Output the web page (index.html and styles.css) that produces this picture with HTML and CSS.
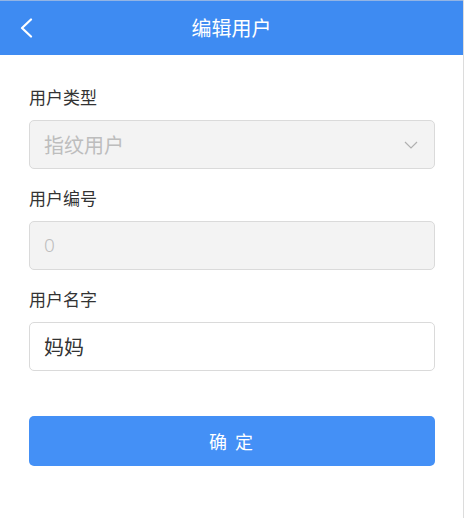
FILE: index.html
```html
<!DOCTYPE html>
<html lang="zh-CN">
<head>
<meta charset="utf-8">
<title>编辑用户</title>
<link rel="stylesheet" href="styles.css">
</head>
<body>
<div class="page">
  <header class="topbar">
    <button class="back" type="button" aria-label="返回">
      <svg width="14" height="20" viewBox="0 0 14 20"><path d="M12 1.5 L3 10 L12 18.5" fill="none" stroke="#fff" stroke-width="2.2" stroke-linecap="round" stroke-linejoin="round"/></svg>
    </button>
    <h1 class="title">编辑用户</h1>
  </header>
  <main class="form">
    <div class="group">
      <label class="label">用户类型</label>
      <div class="field field-disabled field-select">
        <span class="value muted">指纹用户</span>
        <svg class="caret" width="14" height="8" viewBox="0 0 14 8"><path d="M1 1 L7 7 L13 1" fill="none" stroke="#b0b0b0" stroke-width="1.2"/></svg>
      </div>
    </div>
    <div class="group">
      <label class="label">用户编号</label>
      <div class="field field-disabled">
        <span class="value muted num">0</span>
      </div>
    </div>
    <div class="group">
      <label class="label">用户名字</label>
      <div class="field">
        <span class="value">妈妈</span>
      </div>
    </div>
    <button class="submit" type="button">确 定</button>
  </main>
</div>
</body>
</html>
```
FILE: styles.css
```css
* { box-sizing: border-box; }
html, body { margin: 0; padding: 0; background: #fff; }
body {
  font-family: "Noto Sans CJK SC", "Noto Sans", sans-serif;
  color: #333;
}
.page {
  width: 464px;
  min-height: 518px;
  border-right: 1px solid #dcdcdc;
  background: #fff;
}
.topbar {
  height: 55px;
  background: #3e8bf2;
  border-top: 1px solid #93b4e4;
  display: flex;
  align-items: center;
  justify-content: center;
  position: relative;
}
.back {
  position: absolute;
  left: 19px;
  top: 17px;
  padding: 0;
  border: 0;
  background: none;
  width: 14px;
  height: 20px;
  display: flex;
}
.title {
  margin: 0;
  font-size: 20px;
  font-weight: 400;
  color: #fff;
  line-height: 1;
  margin-top: -1px;
}
.form {
  padding: 30px 28px 0 29px;
  display: flex;
  flex-direction: column;
}
.group {
  display: flex;
  flex-direction: column;
  gap: 11px;
  margin-bottom: 17px;
}
.label {
  font-size: 17px;
  line-height: 24px;
  color: #333;
}
.field {
  height: 49px;
  border: 1px solid #dadada;
  border-radius: 5px;
  background: #fff;
  display: flex;
  align-items: center;
  padding: 0 14px;
}
.field-disabled { background: #f3f3f3; }
.field-select { justify-content: space-between; padding-right: 16px; }
.value {
  font-size: 20px;
  line-height: 1;
  color: #333;
}
.value.muted { color: #bdbdbd; }
.value.num { font-family: "Noto Sans", sans-serif; font-weight: 300; font-size: 19px; }
.caret { display: block; }
.submit {
  margin-top: 28px;
  height: 50px;
  border: 0;
  border-radius: 5px;
  background: #4490f6;
  color: #fff;
  font-family: "Noto Sans CJK SC", "Noto Sans", sans-serif;
  font-size: 18px;
  letter-spacing: 2px;
}
```
